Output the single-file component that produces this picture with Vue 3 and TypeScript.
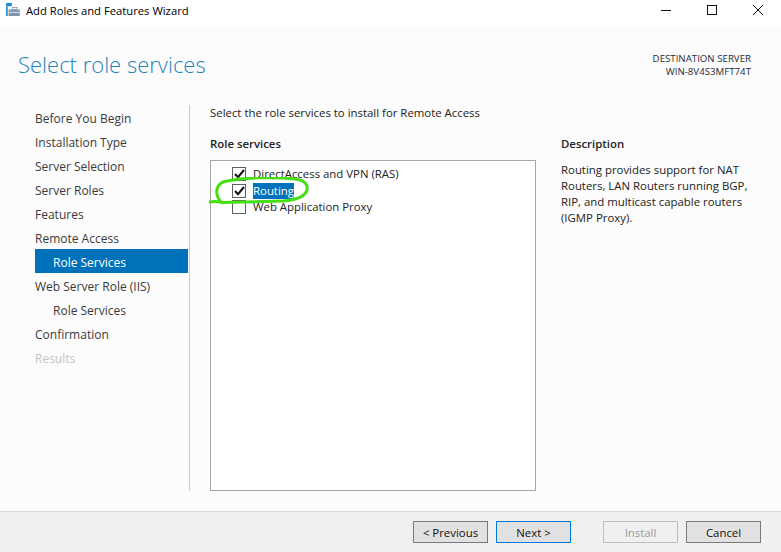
<template>
  <div class="window">
    <header class="titlebar">
      <svg class="app-icon" width="14" height="13" viewBox="0 0 17 16">
        <rect x="0" y="0" width="7" height="4" fill="#1e88d2" />
        <rect x="0" y="4" width="2" height="12" fill="#1e88d2" />
        <rect x="3" y="8" width="14" height="8" fill="#7f98ad" />
        <rect x="3" y="11" width="14" height="1" fill="#e8eef3" />
        <rect x="7.5" y="5.5" width="6" height="2.5" fill="none" stroke="#7f98ad" stroke-width="1" />
      </svg>
      <span class="title">Add Roles and Features Wizard</span>
      <div class="controls">
        <svg width="12" height="12" viewBox="0 0 12 12"><path d="M1 6.5h10" stroke="#111" stroke-width="1" /></svg>
        <svg width="12" height="12" viewBox="0 0 12 12"><rect x="1.5" y="1.5" width="9" height="9" fill="none" stroke="#111" stroke-width="1" /></svg>
        <svg width="12" height="12" viewBox="0 0 12 12"><path d="M1 1l10 10M11 1L1 11" stroke="#111" stroke-width="1" /></svg>
      </div>
    </header>

    <div class="body">
      <div class="head">
        <h1>Select role services</h1>
        <div class="server">
          <div>DESTINATION SERVER</div>
          <div>WIN-8V4S3MFT74T</div>
        </div>
      </div>

      <div class="columns">
        <nav class="steps">
          <div
            v-for="step in steps"
            :key="step.label + step.sub"
            class="step"
            :class="{ sub: step.sub, active: step.active, disabled: step.disabled }"
          >
            {{ step.label }}
          </div>
        </nav>

        <main class="content">
          <p class="intro">Select the role services to install for Remote Access</p>
          <div class="panes">
            <section class="services">
              <h2>Role services</h2>
              <div class="listbox">
                <label v-for="svc in services" :key="svc.name" class="svc">
                  <span class="check">
                    <svg v-if="svc.checked" width="11" height="10" viewBox="0 0 11 10">
                      <path d="M1 5l3 3.2L10 1" fill="none" stroke="#111" stroke-width="2" />
                    </svg>
                  </span>
                  <span class="svc-name" :class="{ picked: svc.picked }">{{ svc.name }}</span>
                </label>
                <svg class="scribble" width="102" height="32" viewBox="0 0 102 32">
                  <path
                    d="M0 25C5 24 8 24.500 12 25C6 18 6 9 14 5C32 0 68 0 86 2C96 3 99 8 98 13C96 20 87 23 74 24C52 24.500 30 25 12 25.500"
                    fill="none"
                    stroke="#45df12"
                    stroke-width="3"
                    stroke-linecap="round"
                  />
                </svg>
              </div>
            </section>
            <aside class="description">
              <h2>Description</h2>
              <p>Routing provides support for NAT Routers, LAN Routers running BGP, RIP, and multicast capable routers (IGMP Proxy).</p>
            </aside>
          </div>
        </main>
      </div>
    </div>

    <footer class="footer">
      <button class="btn">&lt; Previous</button>
      <button class="btn focus">Next &gt;</button>
      <button class="btn off">Install</button>
      <button class="btn">Cancel</button>
    </footer>
  </div>
</template>

<script setup lang="ts">
interface Step {
  label: string
  sub?: boolean
  active?: boolean
  disabled?: boolean
}

const steps: Step[] = [
  { label: 'Before You Begin' },
  { label: 'Installation Type' },
  { label: 'Server Selection' },
  { label: 'Server Roles' },
  { label: 'Features' },
  { label: 'Remote Access' },
  { label: 'Role Services', sub: true, active: true },
  { label: 'Web Server Role (IIS)' },
  { label: 'Role Services', sub: true },
  { label: 'Confirmation' },
  { label: 'Results', disabled: true }
]

const services = [
  { name: 'DirectAccess and VPN (RAS)', checked: true },
  { name: 'Routing', checked: true, picked: true },
  { name: 'Web Application Proxy', checked: false }
]
</script>

<style scoped>
.window {
  width: 781px;
  height: 552px;
  display: flex;
  flex-direction: column;
  overflow: hidden;
  background: #fcfcfc;
  color: #1e1e1e;
  font-family: "Open Sans", "Noto Sans", sans-serif;
  font-size: 11.4px;
}

.titlebar {
  height: 26px;
  flex: none;
  box-sizing: border-box;
  padding: 0 0 5px 6px;
  background: #fff;
  display: flex;
  align-items: center;
}

.app-icon {
  margin: -2px 6px 0 0;
}

.title {
  color: #000;
  font-size: 11.25px;
}

.controls {
  margin-left: auto;
  margin-top: -1px;
  display: flex;
  gap: 34px;
  padding-right: 17px;
}

.body {
  flex: 1;
  min-height: 0;
  display: flex;
  flex-direction: column;
}

.head {
  height: 79px;
  flex: none;
  display: flex;
  justify-content: space-between;
  padding: 0 30px 0 18px;
}

h1 {
  margin: 20px 0 0;
  font-size: 22px;
  line-height: 36px;
  font-weight: 300;
  color: #1f82b8;
}

.server {
  margin-top: 26px;
  text-align: right;
  font-size: 9.7px;
  line-height: 13px;
  color: #1e2a3a;
}

.columns {
  flex: 1;
  min-height: 0;
  display: flex;
  padding-bottom: 20px;
}

.steps {
  width: 153px;
  margin-left: 35px;
  flex: none;
}

.step {
  height: 24px;
  line-height: 28px;
  font-size: 12px;
  color: #3a3a3a;
}

.step.sub {
  padding-left: 18px;
}

.step.active {
  background: #0072bc;
  color: #fff;
}

.step.disabled {
  color: #c4c4c4;
}

.content {
  flex: 1;
  border-left: 1px solid #c9c9c9;
  margin-left: 1px;
  padding-left: 20px;
  padding-right: 20px;
  display: flex;
  flex-direction: column;
  min-width: 0;
}

.intro {
  margin: 0;
  line-height: 16px;
  color: #222;
}

.panes {
  flex: 1;
  min-height: 0;
  margin-top: 15px;
  display: flex;
  gap: 25px;
}

.services {
  width: 326px;
  flex: none;
  display: flex;
  flex-direction: column;
}

h2 {
  margin: 0;
  font-size: 11.4px;
  line-height: 16px;
  font-weight: 600;
  color: #222;
}

.listbox {
  position: relative;
  flex: 1;
  margin-top: 8px;
  background: #fff;
  border: 1px solid #a6a6a6;
  padding: 5px 0 0 21px;
}

.svc {
  display: flex;
  align-items: center;
  height: 16.5px;
  gap: 7px;
}

.check {
  width: 14px;
  height: 14px;
  flex: none;
  display: flex;
  align-items: center;
  justify-content: center;
  border: 1px solid #5f5f5f;
  background: #fff;
  box-sizing: border-box;
}

.check svg {
  flex: none;
}

.svc-name {
  color: #222;
  line-height: 16px;
}

.svc-name.picked {
  background: #0072bc;
  color: #fff;
}

.scribble {
  position: absolute;
  left: -2px;
  top: 16px;
}

.description p {
  margin: 10px 0 0;
  width: 195px;
  line-height: 16px;
  color: #222;
}

.footer {
  height: 41px;
  flex: none;
  background: #f0f0f0;
  border-top: 1px solid #dcdcdc;
  box-sizing: border-box;
  display: flex;
  align-items: center;
  padding: 0 20px 0 413px;
  gap: 8px;
}

.btn {
  width: 75px;
  height: 22px;
  padding: 0;
  border: 1px solid #7a7a7a;
  background: #e1e1e1;
  color: #111;
  font: inherit;
}

.btn.focus {
  border-color: #0078d7;
}

.btn.off {
  margin-left: 24px;
  border-color: #bfbfbf;
  background: #f0f0f0;
  color: #9a9a9a;
}
</style>
